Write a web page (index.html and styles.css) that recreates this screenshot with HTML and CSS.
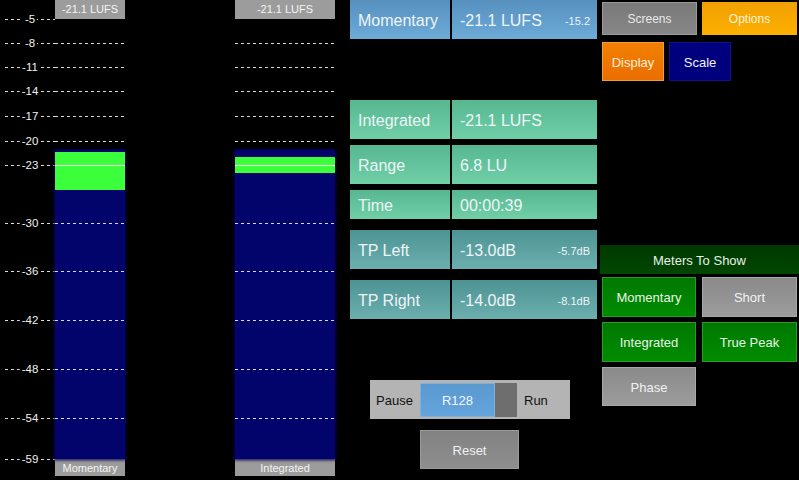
FILE: index.html
```html
<!DOCTYPE html>
<html>
<head>
<meta charset="utf-8">
<link rel="stylesheet" href="styles.css">
</head>
<body>
<div class="app">
  <div class="scale">
    <div class="tick" style="top:19px"><span>-5</span></div>
    <div class="tick" style="top:43px"><span>-8</span></div>
    <div class="tick" style="top:67px"><span>-11</span></div>
    <div class="tick" style="top:91px"><span>-14</span></div>
    <div class="tick" style="top:116px"><span>-17</span></div>
    <div class="tick" style="top:141px"><span>-20</span></div>
    <div class="tick" style="top:165px"><span>-23</span></div>
    <div class="tick" style="top:223px"><span>-30</span></div>
    <div class="tick" style="top:271px"><span>-36</span></div>
    <div class="tick" style="top:320px"><span>-42</span></div>
    <div class="tick" style="top:369px"><span>-48</span></div>
    <div class="tick" style="top:418px"><span>-54</span></div>
    <div class="tick" style="top:459px"><span>-59</span></div>
  </div>

  <div class="meter meter-m">
    <div class="mlabel">-21.1 LUFS</div>
    <div class="bar">
      <div class="fill" style="top:131px"></div>
      <div class="peak" style="top:133px;height:38px"></div>
      <div class="gl" style="top:24px"></div>
      <div class="gl" style="top:48px"></div>
      <div class="gl" style="top:72px"></div>
      <div class="gl" style="top:97px"></div>
      <div class="gl" style="top:122px"></div>
      <div class="gl target" style="top:146px"></div>
      <div class="gl" style="top:204px"></div>
      <div class="gl" style="top:252px"></div>
      <div class="gl" style="top:301px"></div>
      <div class="gl" style="top:350px"></div>
      <div class="gl" style="top:399px"></div>
    </div>
    <div class="mlabel">Momentary</div>
  </div>

  <div class="meter meter-i">
    <div class="mlabel">-21.1 LUFS</div>
    <div class="bar">
      <div class="fill" style="top:131px"></div>
      <div class="peak" style="top:138px;height:16px"></div>
      <div class="gl" style="top:24px"></div>
      <div class="gl" style="top:48px"></div>
      <div class="gl" style="top:72px"></div>
      <div class="gl" style="top:97px"></div>
      <div class="gl" style="top:122px"></div>
      <div class="gl target" style="top:146px"></div>
      <div class="gl" style="top:204px"></div>
      <div class="gl" style="top:252px"></div>
      <div class="gl" style="top:301px"></div>
      <div class="gl" style="top:350px"></div>
      <div class="gl" style="top:399px"></div>
    </div>
    <div class="mlabel">Integrated</div>
  </div>

  <div class="readouts">
    <div class="row blue r-mom">
      <div class="cell name">Momentary</div>
      <div class="cell val">-21.1 LUFS<span class="sub">-15.2</span></div>
    </div>
    <div class="row green r-int">
      <div class="cell name">Integrated</div>
      <div class="cell val">-21.1 LUFS</div>
    </div>
    <div class="row green r-range">
      <div class="cell name">Range</div>
      <div class="cell val">6.8 LU</div>
    </div>
    <div class="row green r-time">
      <div class="cell name">Time</div>
      <div class="cell val">00:00:39</div>
    </div>
    <div class="row teal r-tpl">
      <div class="cell name">TP Left</div>
      <div class="cell val">-13.0dB<span class="sub">-5.7dB</span></div>
    </div>
    <div class="row teal r-tpr">
      <div class="cell name">TP Right</div>
      <div class="cell val">-14.0dB<span class="sub">-8.1dB</span></div>
    </div>
    <div class="toggle">
      <span class="tlabel">Pause</span>
      <div class="track"><div class="thumb">R128</div></div>
      <span class="tlabel run">Run</span>
    </div>
    <div class="btn gray reset">Reset</div>
  </div>

  <div class="side">
    <div class="toprow">
      <div class="btn screens">Screens</div>
      <div class="btn options">Options</div>
    </div>
    <div class="secrow">
      <div class="btn display">Display</div>
      <div class="btn scalebtn">Scale</div>
    </div>
    <div class="header">Meters To Show</div>
    <div class="mgrid">
      <div class="btn on">Momentary</div>
      <div class="btn gray">Short</div>
      <div class="btn on">Integrated</div>
      <div class="btn on">True Peak</div>
      <div class="btn gray phase">Phase</div>
    </div>
  </div>
</div>
</body>
</html>
```

FILE: styles.css
```css
* { box-sizing: border-box; }
html, body { margin: 0; padding: 0; background: #000; }
body {
  font-family: "Liberation Sans", Arial, sans-serif;
  color: #f2f2f2;
}
.app {
  display: flex;
  width: 799px;
  height: 480px;
  overflow: hidden;
  background: #000;
}

/* scale */
.scale {
  position: relative;
  width: 55px;
  flex: none;
}
.tick {
  position: absolute;
  left: 5px;
  width: 50px;
  height: 1px;
  background: repeating-linear-gradient(to right, #dcdcdc 0 3px, transparent 3px 6px);
}
.tick span {
  position: absolute;
  left: 25px;
  top: -7px;
  transform: translateX(-50%);
  background: #000;
  padding: 0 2px;
  font-size: 11.5px;
  line-height: 14px;
  color: #f0f0f0;
}

/* meters */
.meter {
  display: flex;
  flex-direction: column;
  flex: none;
  height: 476px;
}
.meter-m { width: 70px; }
.meter-i { width: 100px; margin-left: 110px; }
.mlabel {
  height: 19px;
  background: #9c9c9c;
  color: #f4f4f4;
  font-size: 11px;
  line-height: 19px;
  text-align: center;
  flex: none;
}
.meter .mlabel:last-child {
  height: 17px;
  line-height: 18px;
}
.bar {
  position: relative;
  flex: 1;
}
.fill {
  position: absolute;
  left: 0;
  right: 0;
  bottom: 0;
  background: #03036c;
  box-shadow: 0 0 3px 1px #020250;
}
.peak {
  position: absolute;
  left: 0;
  right: 0;
  background: #3cff3c;
}
.gl {
  position: absolute;
  left: 0;
  right: 0;
  height: 1px;
  background: repeating-linear-gradient(to right, #d8d8e8 0 3px, transparent 3px 6px);
}
.gl.target {
  background: #e6ffe0;
}

/* readouts */
.readouts {
  width: 247px;
  margin-left: 15px;
  flex: none;
  display: flex;
  flex-direction: column;
}
.row {
  display: flex;
  gap: 2px;
  height: 39px;
  flex: none;
}
.cell {
  display: flex;
  align-items: center;
  padding-left: 8px;
  padding-top: 2px;
  font-size: 16px;
  color: #eef5f8;
}
.cell.name { width: 100px; }
.cell.val { width: 145px; position: relative; }
.sub {
  position: absolute;
  right: 7px;
  font-size: 11px;
  top: 50%;
  transform: translateY(-40%);
}
.blue .cell { background: linear-gradient(#5690bf, #6eabd8); }
.green .cell { background: linear-gradient(#56b791, #70cfa7); }
.teal .cell { background: linear-gradient(#4e9393, #6bafaf); }
.r-int { margin-top: 61px; }
.r-range { margin-top: 6px; }
.r-time { margin-top: 6px; height: 29px; }
.r-tpl { margin-top: 11px; }
.r-tpr { margin-top: 11px; }

.toggle {
  margin-top: 61px;
  margin-left: 20px;
  width: 200px;
  height: 39px;
  background: #b4b4b4;
  display: flex;
  align-items: center;
  flex: none;
}
.tlabel {
  font-size: 13px;
  color: #111;
  width: 50px;
  padding-left: 6px;
  padding-top: 1px;
}
.tlabel.run { padding-left: 7px; }
.track {
  width: 97px;
  height: 34px;
  background: #6e6e6e;
  display: flex;
}
.thumb {
  width: 75px;
  height: 34px;
  background: linear-gradient(#5a98d0, #64a4dc);
  border: 1px solid #7fb0dc;
  color: #f4f8fc;
  font-size: 13px;
  padding-top: 1px;
  display: flex;
  align-items: center;
  justify-content: center;
}

.btn {
  display: flex;
  align-items: center;
  justify-content: center;
  font-size: 13px;
  padding-top: 1px;
  color: #f2f2f2;
  flex: none;
}
.reset {
  margin-top: 11px;
  margin-left: 70px;
  width: 99px;
  height: 39px;
}
.btn.gray {
  background: linear-gradient(#8a8a8a, #9c9c9c);
  border: 1px solid #a8a8a8;
}
.reset.gray {
  background: linear-gradient(#828282, #8e8e8e);
  border: 1px solid #9a9a9a;
}

/* side */
.side {
  width: 199px;
  margin-left: 3px;
  flex: none;
  display: flex;
  flex-direction: column;
}
.toprow {
  display: flex;
  gap: 5px;
  margin-top: 2px;
  margin-left: 2px;
}
.screens, .options {
  width: 95px;
  height: 33px;
  font-size: 12px;
}
.screens {
  background: linear-gradient(#7a7a7a, #868686);
  border: 1px solid #9a9a9a;
  color: #e8e8e8;
}
.options {
  background: linear-gradient(#f0a000, #fdb000);
  color: #fff4dc;
}
.secrow {
  display: flex;
  gap: 5px;
  margin-top: 7px;
  margin-left: 2px;
}
.display, .scalebtn {
  width: 62px;
  height: 39px;
}
.display {
  background: linear-gradient(#f28000, #ea6e00);
  border: 1px solid #f59a40;
  color: #ffeede;
}
.scalebtn {
  background: #00007e;
  border: 1px solid #10108e;
}
.header {
  margin-top: 164px;
  height: 29px;
  padding-top: 1px;
  background: linear-gradient(#003800, #004600);
  display: flex;
  align-items: center;
  justify-content: center;
  font-size: 13px;
  color: #e8f0e8;
}
.mgrid {
  display: grid;
  grid-template-columns: 94px 95px;
  grid-auto-rows: 40px;
  column-gap: 6px;
  row-gap: 5px;
  margin-top: 3px;
  margin-left: 2px;
}
.btn.on {
  background: linear-gradient(#007800, #008c00);
  border: 1px solid #2a9a2a;
  color: #e8f4e8;
}
.mgrid .phase { height: 39px; }
```
